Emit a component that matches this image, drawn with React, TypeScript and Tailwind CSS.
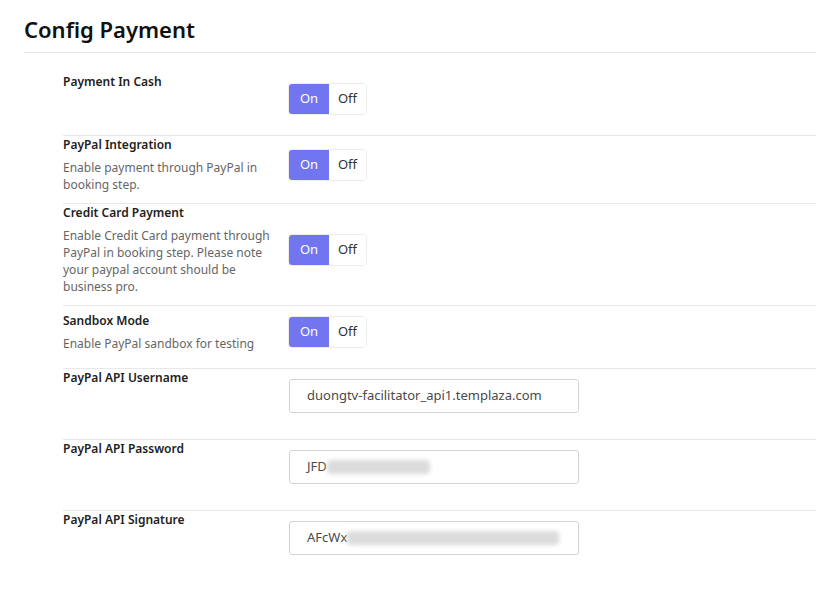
// Payment settings panel: on/off toggles for each gateway plus the
// PayPal API credentials. Credentials are partly blurred on purpose.

const FONT = "font-['Noto_Sans',_'Open_Sans',_sans-serif]";

function OnOff({ on = true }: { on?: boolean }) {
  return (
    <div className="my-[10px] flex h-8 w-[79px] shrink-0 overflow-hidden rounded border border-[#ececec] text-[13px]">
      <span
        className={`flex w-10 items-center justify-center ${
          on ? 'bg-[#7176f0] text-white' : 'bg-white text-[#333]'
        }`}
      >
        On
      </span>
      <span
        className={`flex flex-1 items-center justify-center ${
          on ? 'bg-white text-[#333]' : 'bg-[#7176f0] text-white'
        }`}
      >
        Off
      </span>
    </div>
  );
}

function ToggleRow({
  label,
  desc,
  first,
}: {
  label: string;
  desc?: React.ReactNode;
  first?: boolean;
}) {
  return (
    <div
      className={`flex pb-[10px] ${
        first ? 'items-start pt-5' : 'items-center border-t border-[#e8e8e8]'
      }`}
    >
      <div className="w-[225px] shrink-0 pr-2">
        <div className="text-[12px] font-semibold leading-[17px] text-[#222]">{label}</div>
        {desc && (
          <div className="mt-[6px] text-[12px] leading-[17px] text-[#666]">{desc}</div>
        )}
      </div>
      <OnOff />
    </div>
  );
}

function InputRow({ label, children }: { label: string; children: React.ReactNode }) {
  return (
    <div className="flex items-start border-t border-[#e8e8e8] pb-[26px]">
      <div className="w-[226px] shrink-0 text-[12px] font-semibold leading-[17px] text-[#222]">
        {label}
      </div>
      <div className="mt-[10px] flex h-[34px] w-[290px] items-center overflow-hidden whitespace-nowrap rounded-[3px] border border-[#d4d4d4] bg-white px-[17px] text-[13px] text-[#4a4a4a]">
        {children}
      </div>
    </div>
  );
}

function Blur({ w }: { w: number }) {
  return (
    <span
      className="inline-block h-[14px] rounded-sm bg-[#dcdcdc] blur-[2px]"
      style={{ width: w }}
    />
  );
}

export default function App() {
  return (
    <div className={`min-h-[596px] w-[834px] bg-white ${FONT}`}>
      <div className="pl-6 pr-[18px] pt-[14px]">
        <h1 className="border-b border-[#e5e5e5] pb-[7px] text-[22px] font-semibold leading-[31px] text-[#111]">
          Config Payment
        </h1>
        <div className="pl-[39px]">
          <ToggleRow label="Payment In Cash" first />
          <ToggleRow
            label="PayPal Integration"
            desc={
              <>
                Enable payment through PayPal in
                <br />
                booking step.
              </>
            }
          />
          <ToggleRow
            label="Credit Card Payment"
            desc={
              <>
                Enable Credit Card payment through
                <br />
                PayPal in booking step. Please note
                <br />
                your paypal account should be
                <br />
                business pro.
              </>
            }
          />
          <ToggleRow label="Sandbox Mode" desc="Enable PayPal sandbox for testing" />
          <InputRow label="PayPal API Username">
            duongtv-facilitator_api1.templaza.com
          </InputRow>
          <InputRow label="PayPal API Password">
            <span>JFD</span>
            <Blur w={103} />
          </InputRow>
          <InputRow label="PayPal API Signature">
            <span>AFcWx</span>
            <Blur w={212} />
          </InputRow>
        </div>
      </div>
    </div>
  );
}
